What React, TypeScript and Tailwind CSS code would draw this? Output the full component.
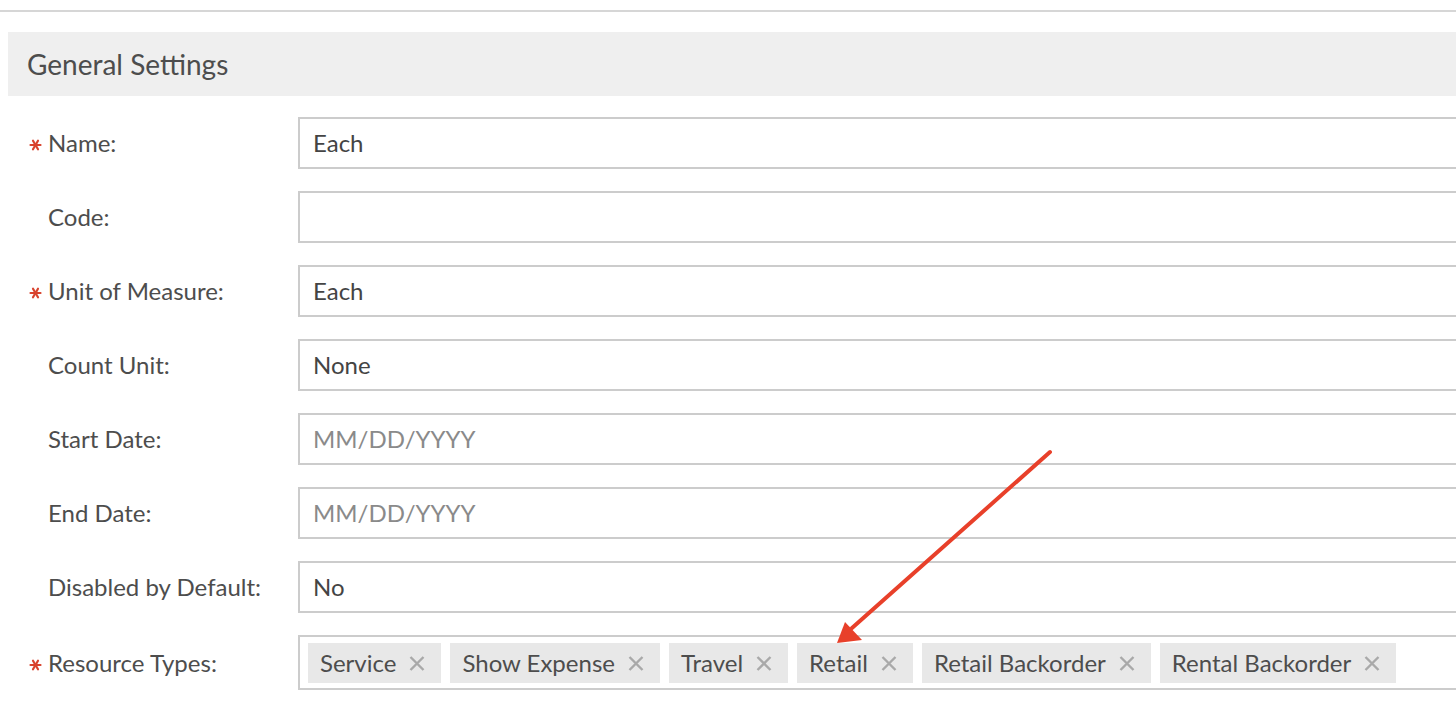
import { Fragment } from "react";

type Field = {
  label: string;
  required?: boolean;
  value?: string;
  placeholder?: string;
};

const FIELDS: Field[] = [
  { label: "Name:", required: true, value: "Each" },
  { label: "Code:", value: "" },
  { label: "Unit of Measure:", required: true, value: "Each" },
  { label: "Count Unit:", value: "None" },
  { label: "Start Date:", placeholder: "MM/DD/YYYY" },
  { label: "End Date:", placeholder: "MM/DD/YYYY" },
  { label: "Disabled by Default:", value: "No" },
];

const RESOURCE_TYPES = [
  "Service",
  "Show Expense",
  "Travel",
  "Retail",
  "Retail Backorder",
  "Rental Backorder",
];

function RequiredMark() {
  return (
    <svg width="13" height="12" viewBox="0 0 13 12" className="mt-[4px]">
      <g stroke="#d8432e" strokeWidth="2.2" strokeLinecap="round">
        <path d="M1.5 6 L11.5 6" />
        <path d="M4 1.7 L9 10.3" />
        <path d="M9 1.7 L4 10.3" />
      </g>
    </svg>
  );
}

function FieldLabel({ label, required }: { label: string; required?: boolean }) {
  return (
    <div className="flex w-[298px] shrink-0 items-center pl-[29px] text-[24px] text-[#4d4d4d]">
      <span className="flex w-[19px] shrink-0 items-center">
        {required && <RequiredMark />}
      </span>
      <span>{label}</span>
    </div>
  );
}

function Tag({ name }: { name: string }) {
  return (
    <div className="flex h-[40px] items-center gap-[13px] bg-[#e8e8e8] pl-[12px] pr-[16px] text-[24px] text-[#4d4d4d]">
      <span>{name}</span>
      <svg width="16" height="15" viewBox="0 0 16 15" className="mt-[1px]">
        <path d="M1.5 1 L14.5 14 M14.5 1 L1.5 14" stroke="#a9a9a9" strokeWidth="2.4" />
      </svg>
    </div>
  );
}

export default function App() {
  return (
    <div
      className="relative h-[726px] w-[1456px] overflow-hidden bg-white"
      style={{ fontFamily: "Lato, 'Open Sans', sans-serif" }}
    >
      <div className="mt-[10px] h-[2px] w-full bg-[#d6d6d6]" />
      <div className="ml-[8px] mt-[20px] flex h-[64px] w-[1480px] items-center bg-[#efefef] pl-[19px] text-[28px] text-[#4d4d4d]">
        General Settings
      </div>
      <div className="mt-[21px] flex w-[1480px] flex-col gap-[22px]">
        {FIELDS.map((field) => (
          <div key={field.label} className="flex h-[52px]">
            <FieldLabel label={field.label} required={field.required} />
            <div className="flex flex-1 items-center border-2 border-[#cccccc] pl-[13px] text-[24px] text-[#444444]">
              {field.placeholder ? (
                <span className="text-[#8a8a8a]">{field.placeholder}</span>
              ) : (
                field.value
              )}
            </div>
          </div>
        ))}
        <div className="flex h-[55px]">
          <FieldLabel label="Resource Types:" required />
          <div className="flex flex-1 items-center gap-[9px] border-2 border-[#cccccc] pl-[8px]">
            {RESOURCE_TYPES.map((name) => (
              <Fragment key={name}>
                <Tag name={name} />
              </Fragment>
            ))}
          </div>
        </div>
      </div>
      <svg
        className="pointer-events-none absolute left-0 top-0"
        width="1456"
        height="726"
        viewBox="0 0 1456 726"
      >
        <line x1="1050" y1="452" x2="852" y2="628" stroke="#e8402a" strokeWidth="4" strokeLinecap="round" />
        <polygon points="837,643 845,622 862,640" fill="#e8402a" />
      </svg>
    </div>
  );
}
